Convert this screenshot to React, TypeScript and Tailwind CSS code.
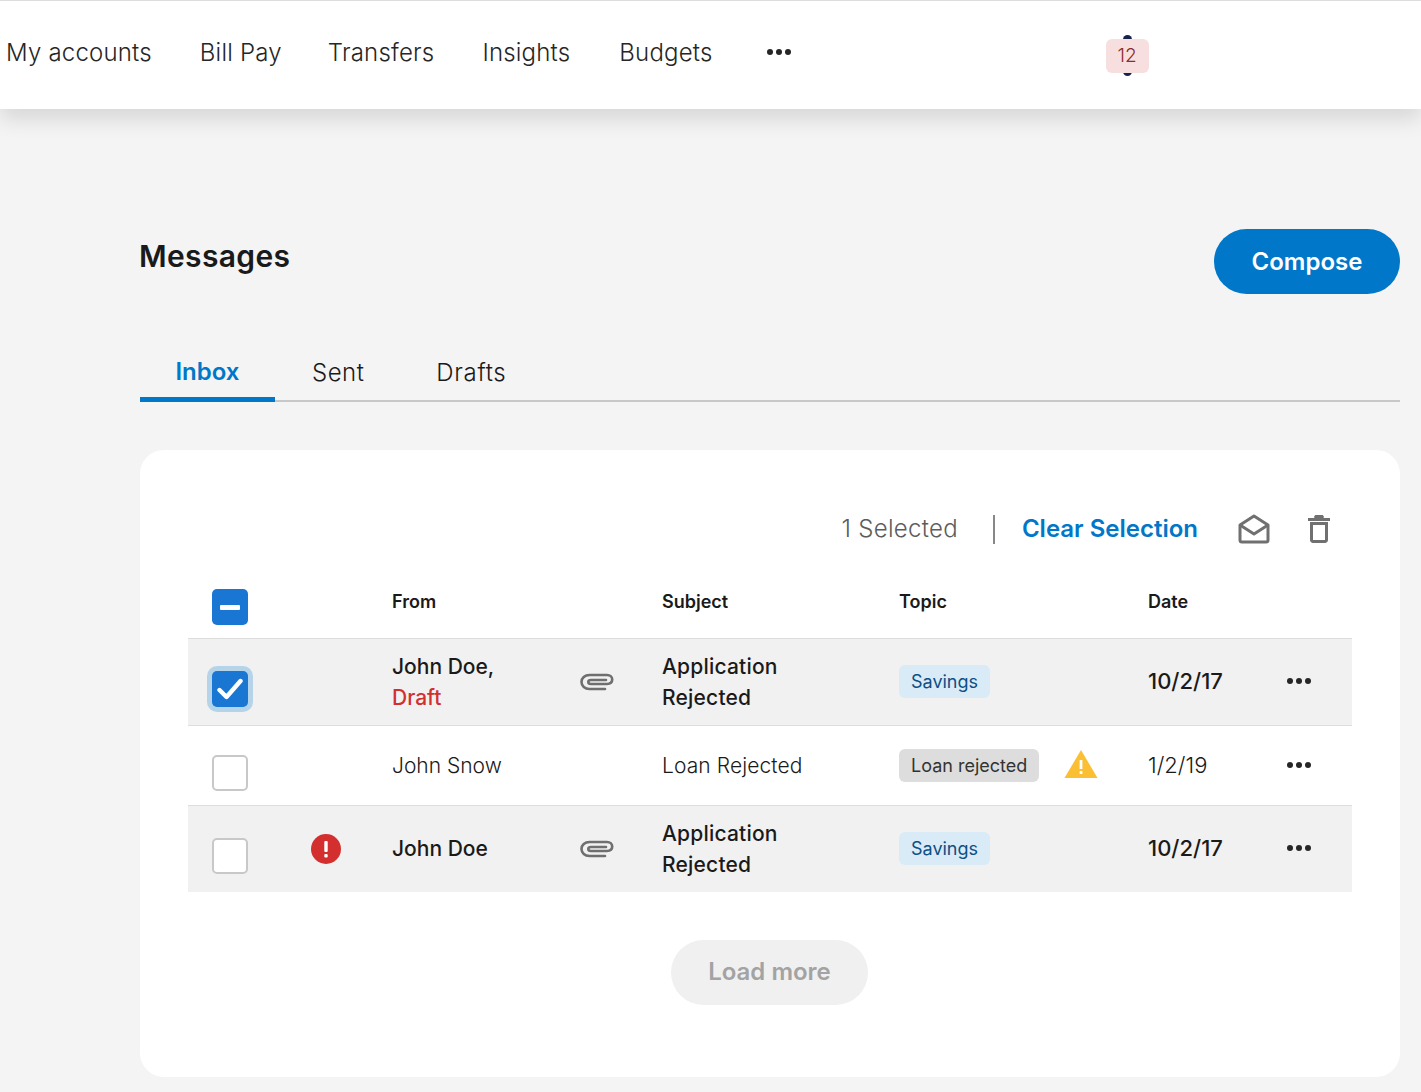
import React from "react";

const Dots = () => (
  <svg width="26" height="8" viewBox="0 0 26 8" fill="#262626"><circle cx="4" cy="4" r="3" /><circle cx="13" cy="4" r="3" /><circle cx="22" cy="4" r="3" /></svg>
);

const Clip = () => (
  <svg width="34" height="18" viewBox="0 0 34 18" fill="none" stroke="#6f6f6f" strokeWidth="2.6" strokeLinecap="round">
    <path d="M25 16H9.5C4.8 16 1.5 13 1.5 9S4.8 2 9.5 2H27c3 0 5.2 1.8 5.2 4.6S30 11 27 11H11c-1.6 0-2.7-.8-2.7-2S9.4 7 11 7h15" />
  </svg>
);

const Box = ({ kind }: { kind?: "minus" | "check" }) => {
  if (kind === "minus")
    return (
      <div className="flex h-9 w-9 items-center justify-center rounded-[5px] bg-[#1976d2]">
        <div className="h-[5px] w-5 rounded-[1px] bg-white" />
      </div>
    );
  if (kind === "check")
    return (
      <div className="flex h-9 w-9 items-center justify-center rounded-[5px] bg-[#1976d2] shadow-[0_0_0_5px_#b5d4ea]">
        <svg width="26" height="22" viewBox="0 0 26 22" fill="none" stroke="#fff" strokeWidth="4.4" strokeLinecap="round" strokeLinejoin="round"><path d="M2.5 12l7 7L23.5 3" /></svg>
      </div>
    );
  return <div className="h-9 w-9 rounded-[5px] border-2 border-[#c8c8c8] bg-white" />;
};

const Tag = ({ children, gray }: { children: React.ReactNode; gray?: boolean }) => (
  <span className={gray ? "inline-flex h-[33px] items-center rounded-[6px] bg-[#dddddd] px-3 text-[18px] leading-none font-normal text-[#333333]" : "inline-flex h-[33px] items-center rounded-[6px] bg-[#d9ebf7] px-3 pt-[2px] text-[18px] leading-none font-normal text-[#0d4f85]"}>
    {children}
  </span>
);

const GRID = "grid grid-cols-[204px_188px_82px_237px_249px_1fr] items-center";

function Tail({ date, up }: { date: string; up?: boolean }) {
  return (
    <div className="mb-[1px] flex items-center justify-between pr-[40px] text-[22px]">
      <span>{date}</span>
      <span className={up ? "mb-[2px] flex" : "flex"}><Dots /></span>
    </div>
  );
}

export default function App() {
  return (
    <div className="min-h-[1092px] overflow-hidden bg-[#f4f4f4] font-['Inter',sans-serif] text-[#1a1a1a]">
      <header className="relative flex h-[109px] items-center border-t border-[#dddde0] bg-white pb-[5px] pl-[6px] shadow-[0_10px_20px_rgba(0,0,0,0.12)]">
        <nav className="flex items-center gap-[48px] text-[24px] font-light tracking-[0.2px] text-[#262626]">
          <span>My accounts</span>
          <span className="-mr-[2px]">Bill Pay</span>
          <span>Transfers</span>
          <span className="mr-[1px]">Insights</span>
          <span>Budgets</span>
          <span className="ml-[5px] mb-[2px] flex items-center"><Dots /></span>
        </nav>
        <div className="relative mt-[7px] ml-[314px]">
          <div className="absolute top-[-4px] left-[17px] h-[41px] w-[9px] rounded-full bg-[#16234f]" />
          <div className="relative flex h-[34px] w-[43px] items-center justify-center rounded-[6px] bg-[#f8dfdf] text-[19px] font-light text-[#8c2b2b]">12</div>
        </div>
      </header>

      <main className="pt-[120px] pr-[21px] pl-[140px]">
        <div className="flex items-start justify-between">
          <h1 className="mt-[7px] -ml-[1px] text-[30px] leading-[40px] font-semibold tracking-[0.35px]">Messages</h1>
          <button className="flex h-[65px] w-[186px] items-center justify-center rounded-full bg-[#0077c8] text-[24px] font-semibold text-white">Compose</button>
        </div>

        <div className="mt-[43px] flex h-[65px] items-stretch border-b-2 border-[#c8c8c8] text-[24px] font-light tracking-[0.5px]">
          <div className="mb-[-2px] flex w-[135px] items-center justify-center border-b-[5px] border-[#0077c8] pt-[9px] font-semibold tracking-normal text-[#0077c8]">Inbox</div>
          <div className="ml-[37px] flex items-center pt-[8px]">Sent</div>
          <div className="ml-[72px] flex items-center pt-[8px] tracking-[0.65px]">Drafts</div>
        </div>

        <section className="mt-[48px] h-[627px] rounded-[24px] bg-white px-12 pt-[64px]">
          <div className="flex h-[30px] items-center justify-end pr-[21px] text-[24px]">
            <span className="font-light tracking-[0.3px] text-[#5c5c5c]">1 Selected</span>
            <div className="mr-[27px] ml-[35px] h-[29px] w-[2px] bg-[#888888]" />
            <span className="font-semibold text-[#0077c8]">Clear Selection</span>
            <svg className="ml-[40px]" width="32" height="30" viewBox="0 0 32 30" fill="none" stroke="#707070" strokeWidth="3" strokeLinejoin="round"><path d="M2 11L16 2l14 9v15a2 2 0 0 1-2 2H4a2 2 0 0 1-2-2z" /><path d="M2 11l14 9 14-9" /></svg>
            <svg className="ml-[37px]" width="24" height="28" viewBox="0 0 24 28" fill="none" stroke="#707070" strokeWidth="3"><path d="M1 4.5h22" /><path d="M8 3l1-1.5h6L16 3" /><path d="M4.5 8.5h15V25a1.5 1.5 0 0 1-1.5 1.5H6A1.5 1.5 0 0 1 4.5 25z" /></svg>
          </div>

          <div className={`${GRID} mt-[36px] h-[59px] border-b border-[#dddddd] text-[18px] font-semibold`}>
            <div className="self-start pt-[9px] pl-6"><Box kind="minus" /></div>
            <div className="mb-[16px]">From</div>
            <div />
            <div className="mb-[16px]">Subject</div>
            <div className="mb-[16px]">Topic</div>
            <div className="mb-[16px]">Date</div>
          </div>

          <div className={`${GRID} h-[87px] border-b border-[#dddddd] bg-[#f1f1f1] text-[21px] font-medium`}>
            <div className="pt-[13px] pl-6"><Box kind="check" /></div>
            <div className="leading-[31px]">John Doe,<br /><span className="text-[#d32f2f]">Draft</span></div>
            <div><Clip /></div>
            <div className="leading-[31px] tracking-[0.2px]">Application<br />Rejected</div>
            <div className="mb-[2px]"><Tag>Savings</Tag></div>
            <Tail date="10/2/17" up />
          </div>

          <div className={`${GRID} h-[80px] border-b border-[#dddddd] text-[21px] font-light`}>
            <div className="pt-[14px] pl-6"><Box /></div>
            <div>John Snow</div>
            <div />
            <div className="tracking-[0.1px]">Loan Rejected</div>
            <div className="flex items-center">
              <Tag gray>Loan rejected</Tag>
              <svg className="mt-[-3px] ml-[25px]" width="34" height="30" viewBox="0 0 34 30"><path d="M17 1L33.5 29H.5z" fill="#fbbf33" /><rect x="15.6" y="11" width="2.8" height="9" fill="#fff" /><rect x="15.6" y="22" width="2.8" height="3" fill="#fff" /></svg>
            </div>
            <Tail date="1/2/19" />
          </div>

          <div className={`${GRID} h-[86px] bg-[#f1f1f1] text-[21px] font-medium`}>
            <div className="flex items-start pt-[14px] pl-6">
              <Box />
              <svg className="mt-[-4px] ml-[63px]" width="30" height="30" viewBox="0 0 30 30"><circle cx="15" cy="15" r="15" fill="#d32f2f" /><rect x="13.3" y="7" width="3.4" height="11" rx="1" fill="#fff" /><rect x="13.3" y="20" width="3.4" height="3.4" rx="1" fill="#fff" /></svg>
            </div>
            <div>John Doe</div>
            <div><Clip /></div>
            <div className="leading-[31px] tracking-[0.2px]">Application<br />Rejected</div>
            <div className="mb-[2px]"><Tag>Savings</Tag></div>
            <Tail date="10/2/17" up />
          </div>

          <div className="mt-12 flex justify-center pr-[1px]">
            <button className="flex h-[65px] w-[197px] items-center justify-center rounded-full bg-[#f0f0f0] pb-[1px] text-[24px] font-semibold text-[#a3a3a3]">Load more</button>
          </div>
        </section>
      </main>
    </div>
  );
}
